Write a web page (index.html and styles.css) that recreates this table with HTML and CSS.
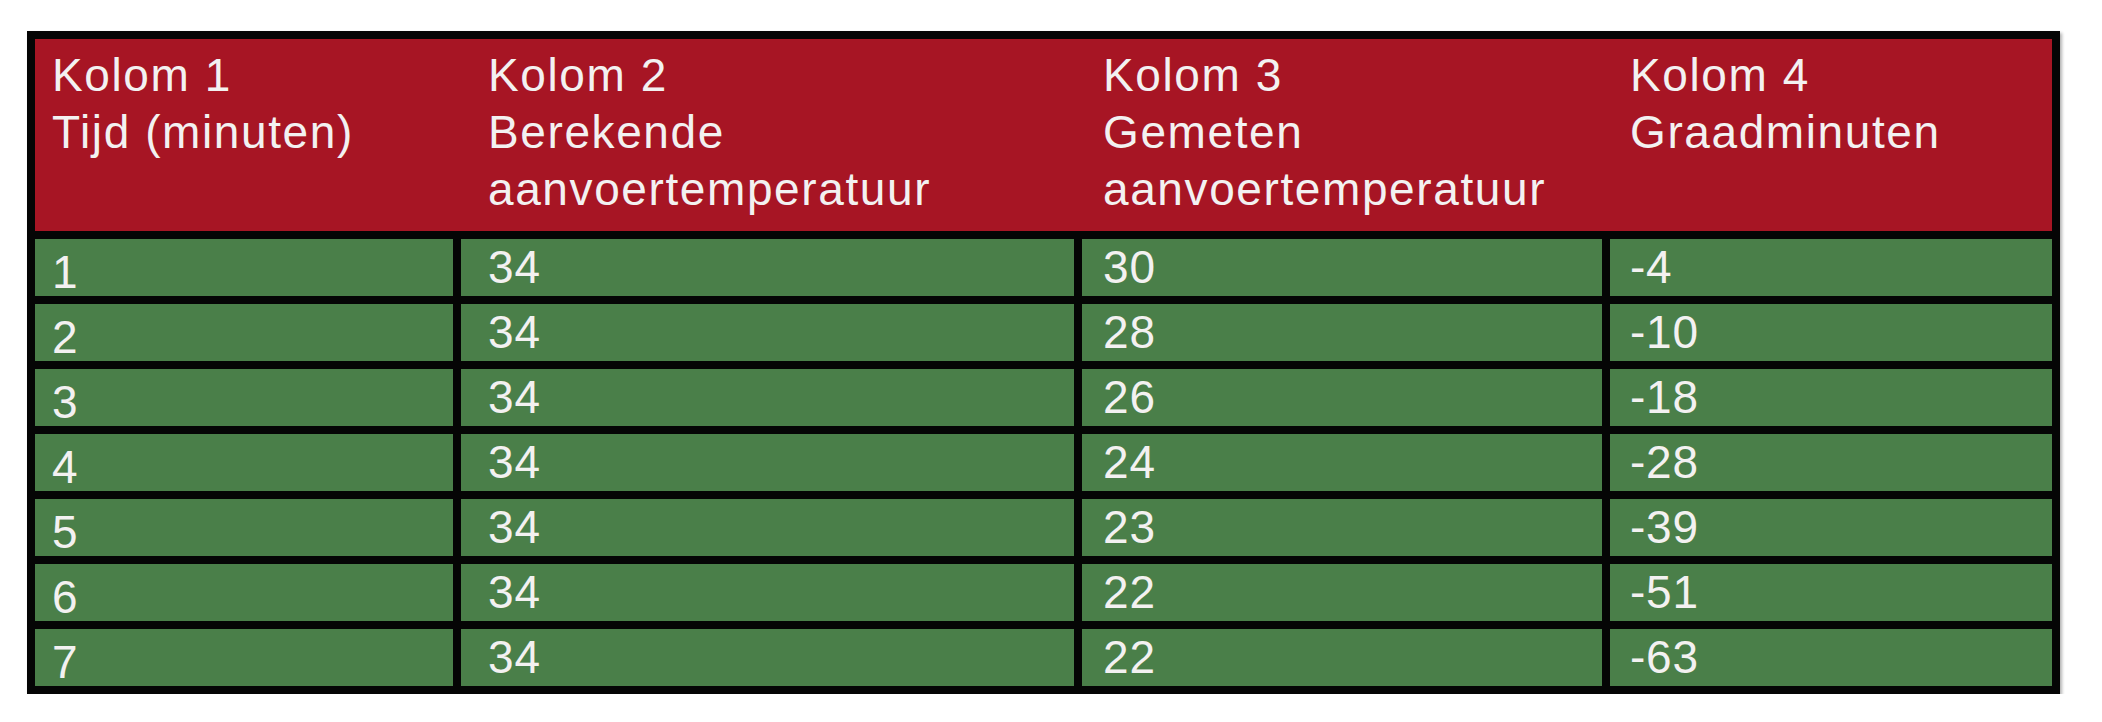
FILE: index.html
```html
<!DOCTYPE html>
<html lang="nl">
<head>
<meta charset="utf-8">
<title>Graadminuten</title>
<link rel="stylesheet" href="styles.css">
</head>
<body>
<div class="table">
  <div class="head">
    <div class="hcell c1">Kolom 1<br>Tijd (minuten)</div>
    <div class="hcell c2">Kolom 2<br>Berekende<br>aanvoertemperatuur</div>
    <div class="hcell c3">Kolom 3<br>Gemeten<br>aanvoertemperatuur</div>
    <div class="hcell c4">Kolom 4<br>Graadminuten</div>
  </div>
  <div class="cell c1">1</div><div class="cell c2">34</div><div class="cell c3">30</div><div class="cell c4">-4</div>
  <div class="cell c1">2</div><div class="cell c2">34</div><div class="cell c3">28</div><div class="cell c4">-10</div>
  <div class="cell c1">3</div><div class="cell c2">34</div><div class="cell c3">26</div><div class="cell c4">-18</div>
  <div class="cell c1">4</div><div class="cell c2">34</div><div class="cell c3">24</div><div class="cell c4">-28</div>
  <div class="cell c1">5</div><div class="cell c2">34</div><div class="cell c3">23</div><div class="cell c4">-39</div>
  <div class="cell c1">6</div><div class="cell c2">34</div><div class="cell c3">22</div><div class="cell c4">-51</div>
  <div class="cell c1">7</div><div class="cell c2">34</div><div class="cell c3">22</div><div class="cell c4">-63</div>
</div>
</body>
</html>
```

FILE: styles.css
```css
html, body {
  margin: 0;
  padding: 0;
  background: #ffffff;
}

body {
  font-family: "Liberation Sans", Arial, Helvetica, sans-serif;
  color: #f3f1f1;
}

.table {
  margin: 31px 0 0 27px;
  width: 2033px;
  box-sizing: border-box;
  display: grid;
  grid-template-columns: 418px 613px 520px 442px;
  grid-template-rows: 192px repeat(7, 57px);
  gap: 8px;
  padding: 8px;
  background: #050505;
  box-shadow: 2px 2px 3px rgba(0, 0, 0, 0.3);
}

.head {
  grid-column: 1 / -1;
  display: grid;
  grid-template-columns: 418px 613px 520px 442px;
  column-gap: 8px;
  box-sizing: border-box;
  padding: 8px 0 0;
  background: #a71524;
}

.hcell {
  font-size: 46px;
  line-height: 57px;
  letter-spacing: 1.6px;
}

.cell {
  background: #4a7f49;
  font-size: 46px;
  line-height: 57px;
  letter-spacing: 0.8px;
}

.c1 { padding-left: 17px; }
.c2 { padding-left: 27px; }
.c3 { padding-left: 21px; }
.c4 { padding-left: 20px; }

.cell.c1 {
  padding-top: 5px;
  box-sizing: border-box;
}
```
